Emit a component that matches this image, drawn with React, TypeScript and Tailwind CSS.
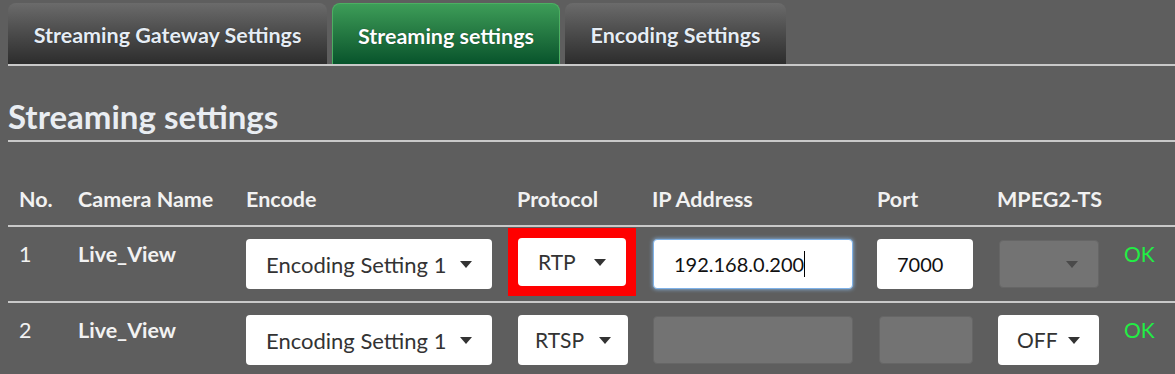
import React from 'react';

const font = { fontFamily: '"Source Sans Pro", Lato, "Noto Sans", sans-serif' };

const Caret = ({ dim }: { dim?: boolean }) => (
  <svg width="12" height="7" viewBox="0 0 12 7" className="shrink-0">
    <path d="M0 0 L12 0 L6 7 Z" fill={dim ? '#4a4a4a' : '#333'} />
  </svg>
);

const Select = ({ value, w, h = 'h-[50px]', pad = 'px-5', text = 'text-[22px]' }: { value: string; w: string; h?: string; pad?: string; text?: string }) => (
  <div className={`${w} ${h} bg-white rounded-[4px] flex items-center justify-between ${pad} ${text} text-[#333]`}>
    <span>{value}</span>
    <Caret />
  </div>
);

const Disabled = ({ w, caret }: { w: string; caret?: boolean }) => (
  <div className={`${w} h-[48px] bg-[#737373] rounded-[4px] border border-[#666] flex items-center justify-end pr-5`}>
    {caret && <Caret dim />}
  </div>
);

const Tab = ({ label, active, w }: { label: string; active?: boolean; w: string }) => (
  <div
    className={`${w} h-[61px] pt-[4px] rounded-t-[8px] flex items-center justify-center text-[21.5px] font-bold ${
      active
        ? 'bg-gradient-to-b from-[#3d9d58] to-[#07542c] border border-[#4caf62] border-b-0 text-white'
        : 'bg-gradient-to-b from-[#6b6b6b] to-[#2d2d2d] text-[#e6edf5]'
    }`}
    style={{ textShadow: '0 0 1px rgba(0,0,0,0.6)' }}
  >
    {label}
  </div>
);

export default function App() {
  return (
    <div className="w-[1175px] h-[374px] bg-[#5e5e5e] overflow-hidden pl-2 pt-[3px]" style={font}>
      <div className="flex gap-[5px]">
        <Tab label="Streaming Gateway Settings" w="w-[319px]" />
        <Tab label="Streaming settings" w="w-[228px]" active />
        <Tab label="Encoding Settings" w="w-[221px]" />
      </div>
      <div className="h-[2px] bg-[#c9c9c9]" />

      <h1 className="mt-[30px] text-[33px] font-bold text-[#e9edf2] leading-[40px]">Streaming settings</h1>
      <div className="mt-[4px] h-[2px] bg-[#c9c9c9]" />

      <div className="mt-[44px] flex items-center h-[26px] text-[21.5px] font-bold text-[#f2f2f2]">
        <div className="w-[70px] pl-[11px]">No.</div>
        <div className="w-[168px]">Camera Name</div>
        <div className="w-[271px]">Encode</div>
        <div className="w-[135px]">Protocol</div>
        <div className="w-[225px]">IP Address</div>
        <div className="w-[120px]">Port</div>
        <div className="w-[127px]">MPEG2-TS</div>
      </div>
      <div className="mt-[13px] h-[2px] bg-[#c9c9c9]" />

      {/* row 1 */}
      <div className="flex items-start h-[74px] pt-[12px] text-[21.5px]">
        <div className="w-[70px] pl-[11px] -mt-[1px] text-[#f2f2f2]">1</div>
        <div className="w-[168px] -mt-[1px] font-bold text-[#f2f2f2]">Live_View</div>
        <div className="w-[262px]">
          <Select value="Encoding Setting 1" w="w-[246px]" />
        </div>
        <div className="w-[145px] -mt-[11px]">
          <div className="w-[128px] border-[10px] border-[#ff0000] bg-[#ff0000]">
            <Select value="RTP" w="w-[108px]" h="h-[48px]" pad="px-5" text="text-[21px]" />
          </div>
        </div>
        <div className="w-[224px]">
          <div className="w-[200px] h-[50px] bg-white rounded-[4px] border border-[#7fb2e8] shadow-[0_0_4px_#8fc0f0] flex items-center pl-5 text-[20px] text-[#111]">
            192.168.0.200<span className="w-[1px] h-[26px] bg-black" />
          </div>
        </div>
        <div className="w-[122px]">
          <div className="w-[96px] h-[50px] bg-white rounded-[4px] flex items-center pl-5 text-[20px] text-[#111]">7000</div>
        </div>
        <div className="w-[125px] pt-[1px]">
          <Disabled w="w-[100px]" caret />
        </div>
        <div className="-mt-[1px] text-[21px] text-[#22ee44]">OK</div>
      </div>
      <div className="h-[2px] bg-[#c9c9c9]" />

      {/* row 2 */}
      <div className="flex items-start pt-[12px] text-[21.5px]">
        <div className="w-[70px] pl-[11px] -mt-[1px] text-[#f2f2f2]">2</div>
        <div className="w-[168px] -mt-[1px] font-bold text-[#f2f2f2]">Live_View</div>
        <div className="w-[272px]">
          <Select value="Encoding Setting 1" w="w-[246px]" />
        </div>
        <div className="w-[135px]">
          <Select value="RTSP" w="w-[110px]" pad="px-[17px]" text="text-[21px]" />
        </div>
        <div className="w-[226px] pt-[1px]">
          <Disabled w="w-[200px]" />
        </div>
        <div className="w-[119px] pt-[1px]">
          <Disabled w="w-[94px]" />
        </div>
        <div className="w-[126px]">
          <Select value="OFF" w="w-[101px]" pad="px-[19px]" text="text-[21px]" />
        </div>
        <div className="-mt-[1px] text-[21px] text-[#22ee44]">OK</div>
      </div>
    </div>
  );
}
